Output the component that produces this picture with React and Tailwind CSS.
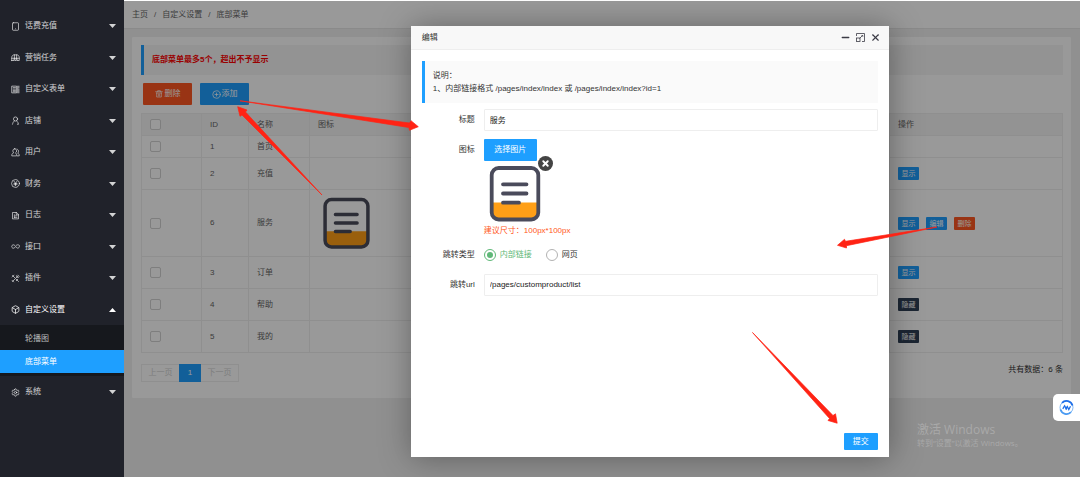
import { Tablet, Box, Settings, CirclePlus, X, Minus } from "lucide-react";

// small line icons, all on a 24 grid
function icon(children) {
  return function Icon({ size, className }) {
    return (
      <svg
        width={size}
        height={size}
        viewBox="0 0 24 24"
        className={className}
        fill="none"
        stroke="currentColor"
        strokeWidth="2"
        strokeLinecap="round"
        strokeLinejoin="round"
      >
        {children}
      </svg>
    );
  };
}

const Task = icon(
  <path d="M2 20v-8c0-4 3-7 6-7h8c3 0 6 3 6 7v8h-6v-6h-2v6h-4v-6H8v6H2zM2 14h20M9 5v8M15 5v8" />
);
const FormIcon = icon(
  <path d="M3 3h12v18H3zM6 7h6M6 11h6M6 15h6M6 18h6M18 3v18M21 3v5M21 11v10" />
);
const Shop = icon(
  <>
    <circle cx="12" cy="8" r="5.5" />
    <path d="M9 13c-3 2-4 5-5 9M15 13c3 2 4 5 5 9h-3" />
  </>
);
const Users = icon(
  <path d="M10 2C6.500 2 5 5 5 8c0 2 1 4 2 5-3 1-5 3-5 7v1h13v-1c0-4-1-6-3-7 2-1 3-3 3-5 0-3-2-6-5-6zM16 3c3 1 4 3 4 6 0 2-1 4-2 5 3 1 4 3 4 7h-5" />
);
const Yen = icon(
  <>
    <circle cx="12" cy="12" r="10.500" />
    <path d="m8 6 4 5.500L16 6M12 11.500V18M8 12h8M8 15h8" />
  </>
);
const Log = icon(<path d="M5 4h10l5 5v12H5zM14 4v6h6M9 10v7M12 13h4M9 17h7" />);
const Link = icon(
  <path d="M11 14c-2 3-5 3-7 2s-3-5-1-7 5-2 7 0l4 5c2 3 5 3 7 1s2-6 0-7-5-1-7 1" />
);
const Tools = icon(
  <path d="M4 4l6 6M14 14l6 6M20 4 4 20M3 8l5-5M16 3c-2 2-1 5 1 6s4 0 5-2M14 18l4-4M3 17l4 4" />
);
const Trash = icon(
  <path d="M2 5h20M8 5V2h8v3M4 9h16M5 9v12h14V9M10 12v6M14 12v6" />
);

const MENU = [
  { name: "话费充值", icon: Tablet },
  { name: "营销任务", icon: Task },
  { name: "自定义表单", icon: FormIcon },
  { name: "店铺", icon: Shop },
  { name: "用户", icon: Users },
  { name: "财务", icon: Yen },
  { name: "日志", icon: Log },
  { name: "接口", icon: Link },
  { name: "插件", icon: Tools },
  { name: "自定义设置", icon: Box, open: true },
];

const ROWS = [
  { id: 1, name: "首页", height: "h-[22px]", actions: [] },
  { id: 2, name: "充值", height: "h-8", actions: ["显示"] },
  { id: 6, name: "服务", height: "h-[67px]", image: true, actions: ["显示", "编辑", "删除"] },
  { id: 3, name: "订单", height: "h-8", actions: ["显示"] },
  { id: 4, name: "帮助", height: "h-8", actions: ["隐藏"] },
  { id: 5, name: "我的", height: "h-8", actions: ["隐藏"] },
];

const ACTION_COLORS = {
  显示: "bg-[#1e9fff]",
  编辑: "bg-[#1e9fff]",
  删除: "bg-[#ff5722]",
  隐藏: "bg-[#2f4056]",
};

function Caret({ up }) {
  return (
    <svg width="7" height="4" viewBox="0 0 7 4" fill="currentColor" className={up ? "rotate-180" : ""}>
      <path d="M0 0h7L3.5 4z" />
    </svg>
  );
}

function DocIcon({ className }) {
  return (
    <svg viewBox="0 0 62 62" className={className} fill="none" stroke="#4a4b5b" strokeWidth="3.8">
      <path d="M8 39.5h46v11a6 6 0 0 1-6 6H14a6 6 0 0 1-6-6z" fill="#ff9f17" stroke="none" />
      <rect x="7.7" y="5" width="46.6" height="51.5" rx="7" />
      <path d="M19 21.3h23.5M19 30.5h23.5M19 39.7h16" strokeLinecap="round" />
    </svg>
  );
}

function MenuItem({ name, icon: Icon, open }) {
  return (
    <li className="flex odd:h-8 even:h-[31px]">
      <button
        className={`flex flex-1 items-center pl-[11px] pr-2 ${open ? "text-white" : "text-white/80"}`}
        aria-expanded={!!open}
      >
        <Icon size={9} className="mr-[5px]" />
        <span className="flex-1 text-left">{name}</span>
        <Caret up={open} />
      </button>
    </li>
  );
}

function Sidebar() {
  return (
    <aside className="w-[124px] shrink-0 bg-[#20222a] pt-[10px]">
      <ul>
        {MENU.map((m) => (
          <MenuItem key={m.name} {...m} />
        ))}
      </ul>
      <ul className="bg-[#16181d] pb-[3px] pt-[2px]">
        <li>
          <a href="#banner" className="flex h-[23px] items-center pl-[25px] text-white/70">轮播图</a>
        </li>
        <li>
          <a href="#menu" className="flex h-[23px] items-center bg-[#1e9fff] pl-[25px] text-white">底部菜单</a>
        </li>
      </ul>
      <ul>
        <MenuItem name="系统" icon={Settings} />
      </ul>
    </aside>
  );
}

function Check({ label }) {
  return (
    <input
      type="checkbox"
      aria-label={label}
      className="block size-[11px] appearance-none rounded-xs border border-[#d2d2d2] bg-white"
    />
  );
}

function MenuTable() {
  const cell = "border border-[#eee] px-2 text-left font-normal";
  return (
    <table className="mt-2 w-full table-fixed border-collapse text-[#666]">
      <colgroup>
        <col className="w-[60px]" />
        <col className="w-[47px]" />
        <col className="w-[61px]" />
        <col />
        <col className="w-[173px]" />
      </colgroup>
      <thead className="bg-[#f5f5f5]">
        <tr className="h-[22px]">
          <th className={cell}><Check label="全选" /></th>
          <th className={cell}>ID</th>
          <th className={cell}>名称</th>
          <th className={cell}>图标</th>
          <th className={cell}>操作</th>
        </tr>
      </thead>
      <tbody>
        {ROWS.map((row) => (
          <tr key={row.id} className={row.height}>
            <td className={cell}><Check label={row.name} /></td>
            <td className={cell}>{row.id}</td>
            <td className={cell}>{row.name}</td>
            <td className={cell}>{row.image && <DocIcon className="size-[57px]" />}</td>
            <td className={cell}>
              <div className="flex gap-[7px]">
                {row.actions.map((a) => (
                  <button key={a} className={`h-[13px] w-[21px] rounded-[1px] text-[7px] leading-[13px] text-white ${ACTION_COLORS[a]}`}>
                    {a}
                  </button>
                ))}
              </div>
            </td>
          </tr>
        ))}
      </tbody>
    </table>
  );
}

function ListPage() {
  return (
    <>
      <nav className="flex h-[28px] items-center border-b border-[#e6e6e6] bg-white pl-2 text-[#666]">
        <a href="#home">主页</a>
        <span className="mx-[6px]">/</span>
        <a href="#custom">自定义设置</a>
        <span className="mx-[6px]">/</span>
        <span>底部菜单</span>
      </nav>

      <section className="ml-2 mr-[9px] mt-2 rounded-[1px] bg-white pb-4 pl-[9px] pr-2 pt-2">
        <p className="flex h-[30px] items-center border-l-[3px] border-[#1e9fff] bg-[#f5f5f5] pl-2 font-bold text-[red]">
          底部菜单最多5个，超出不予显示
        </p>

        <div className="ml-[2px] mt-2 flex gap-2 text-white">
          <button className="flex h-[22px] w-[49px] items-center justify-center gap-[2px] rounded-[1px] bg-[#ff5722]">
            <Trash size={8} />
            删除
          </button>
          <button className="flex h-[22px] w-[49px] items-center justify-center gap-[1px] rounded-[1px] bg-[#1e9fff]">
            <CirclePlus size={9} />
            添加
          </button>
        </div>

        <MenuTable />

        <div className="mt-[11px] flex items-start justify-between">
          <div className="flex h-[18px] text-[#d2d2d2]">
            <button className="w-[38px] border border-r-0 border-[#eee]">上一页</button>
            <button className="w-[22px] bg-[#1e9fff] text-white">1</button>
            <button className="w-[38px] border border-l-0 border-[#eee]">下一页</button>
          </div>
          <span className="text-[#333]">共有数据：6 条</span>
        </div>
      </section>
    </>
  );
}

function Field({ label, htmlFor, children }) {
  const Label = htmlFor ? "label" : "span";
  return (
    <div className="flex gap-[9px]">
      <Label htmlFor={htmlFor} className="h-[22px] w-[53px] shrink-0 text-right leading-[22px]">
        {label}
      </Label>
      <div className="flex-1">{children}</div>
    </div>
  );
}

function Radio({ label, checked }) {
  return (
    <label className={`flex items-center gap-1 ${checked ? "text-[#5fb878]" : ""}`}>
      <input
        type="radio"
        name="type"
        defaultChecked={checked}
        className="size-3 appearance-none rounded-full border border-[#b2b2b2] bg-clip-content p-[2px] checked:border-[#5fb878] checked:bg-[#5fb878]"
      />
      {label}
    </label>
  );
}

function EditDialog() {
  const input = "block h-[22px] w-full rounded-[1px] border border-[#eee] bg-white px-[5px] pb-[2px] text-[#222] outline-none";
  return (
    <div
      role="dialog"
      aria-label="编辑"
      className="absolute bottom-5 left-[30%] top-[25px] flex w-1/2 flex-col bg-white text-[#333] shadow-[1px_1px_30px_rgba(0,0,0,0.35)]"
    >
      <header className="flex h-6 shrink-0 items-center justify-between border-b border-[#eee] bg-[#f8f8f8] pl-[11px] pr-2">
        <h2>编辑</h2>
        <div className="flex items-center gap-[5px] text-[#3b3b45]">
          <button aria-label="最小化"><Minus size={11} strokeWidth={3} /></button>
          <button aria-label="最大化">
            <svg width="9" height="9" viewBox="0 0 9 9" fill="none" stroke="currentColor">
              <path d="M.5 3V.5h8v8H6M5.500 2.500h1.300v1.300M6.500 2.500l-3 3" strokeWidth=".8" />
              <rect x=".5" y="5" width="3.500" height="3.500" strokeWidth=".8" />
            </svg>
          </button>
          <button aria-label="关闭"><X size={11} strokeWidth={2.5} /></button>
        </div>
      </header>

      <form className="flex flex-1 flex-col px-[11px] pt-[11px]">
        <blockquote className="border-l-[3px] border-[#1e9fff] bg-[#fafafa] px-2 py-2 leading-[13px]">
          说明：
          <br />
          1、内部链接格式 /pages/index/index 或 /pages/index/index?id=1
        </blockquote>

        <div className="mt-[6px] flex flex-col gap-2">
          <Field label="标题" htmlFor="title">
            <input id="title" className={input} defaultValue="服务" />
          </Field>

          <Field label="图标" htmlFor="pick">
            <button id="pick" type="button" className="block h-[22px] w-[53px] rounded-[1px] bg-[#1e9fff] text-white">
              选择图片
            </button>
            <div className="relative mt-[2px] w-[62px]">
              <DocIcon className="size-[62px]" />
              <button
                type="button"
                aria-label="删除图片"
                className="absolute -right-[7px] -top-[7px] flex size-[15px] items-center justify-center rounded-full bg-[#444] text-white"
              >
                <X size={9} strokeWidth={5} />
              </button>
            </div>
            <p className="leading-[11px] text-[#ff5722]">建议尺寸：100px*100px</p>
          </Field>

          <Field label="跳转类型">
            <div role="radiogroup" aria-label="跳转类型" className="flex h-[22px] items-center gap-[14px]">
              <Radio label="内部链接" checked />
              <Radio label="网页" />
            </div>
          </Field>

          <Field label="跳转url" htmlFor="url">
            <input id="url" className={input} defaultValue="/pages/customproduct/list" />
          </Field>
        </div>

        <button type="button" className="mb-[7px] mt-auto h-[17px] w-[34px] self-end rounded-[1px] bg-[#1e9fff] text-white">
          提交
        </button>
      </form>
    </div>
  );
}

// guide arrows drawn on top of the whole page
function Arrows() {
  return (
    <svg
      width="1080"
      height="477"
      className="pointer-events-none absolute left-0 top-0"
      fill="#ff2314"
      stroke="#ff2314"
      strokeWidth=".7"
      strokeLinejoin="round"
    >
      <path d="M240 100.800 409.500 123 411 120.700 418.300 126.700 409.500 130.300 408.800 127.500z" />
      <path d="M322 195 242 115 240 116.300 237.700 106.700 247 110 245.500 112z" />
      <path d="M937 227 846.500 245.700 846.500 248 837.500 245.300 844.500 239.300 845.500 241.300z" />
      <path d="M752.500 332.500 829.500 418.500 828 420.500 837.200 423.200 835.500 413.800 833 415.500z" />
    </svg>
  );
}

export default function App() {
  return (
    <div className="relative flex min-h-screen overflow-hidden font-['Liberation_Sans','Noto_Sans_CJK_SC',sans-serif] text-[8px] leading-[12px]">
      <Sidebar />

      <main className="relative flex-1 border-t border-white bg-[#f0f0f0]">
        <ListPage />
        <div className="absolute inset-0 bg-black/40" />

        {/* windows activation watermark */}
        <div className="absolute bottom-7 right-[51px] w-28 whitespace-nowrap font-['Open_Sans','Noto_Sans_CJK_SC',sans-serif] text-[#a9a9a9]">
          <p className="text-[12px] leading-[14px]">激活 Windows</p>
          <p>转到“设置”以激活 Windows。</p>
        </div>

        <EditDialog />

        <button
          aria-label="助手"
          className="absolute bottom-14 right-0 flex h-[27px] w-[27px] items-center justify-center rounded-l-[5px] bg-white"
        >
          <svg width="15" height="15" viewBox="0 0 15 15" fill="none" stroke="#1f6fe8">
            <circle cx="7.500" cy="7.500" r="6.500" strokeWidth=".7" stroke="#4b9bf2" />
            <path d="M3 2.800A6.300 6.300 0 0 1 13.500 5.500" strokeWidth="1.800" />
            <path d="M12 12.200A6.300 6.300 0 0 1 1.500 9.500" strokeWidth="1.800" stroke="#4b9bf2" />
            <path d="M3.800 8.800 5.600 5.700 7.300 8.800 8.600 6.500" strokeWidth="1.300" />
            <path d="M6.600 9.300 8.300 6.500 9.800 9.500 11.500 6.300" strokeWidth="1.300" />
          </svg>
        </button>
      </main>

      <Arrows />
    </div>
  );
}
